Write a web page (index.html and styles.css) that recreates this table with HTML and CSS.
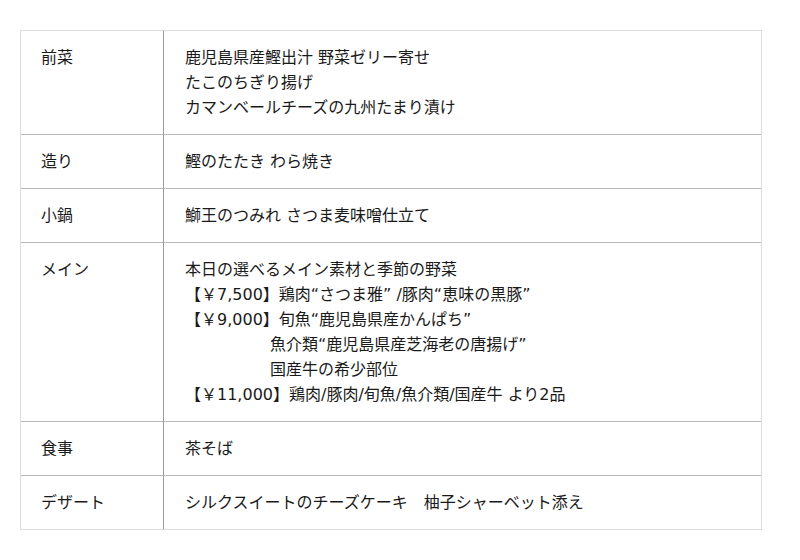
FILE: index.html
```html
<!DOCTYPE html>
<html lang="ja">
<head>
<meta charset="utf-8">
<link rel="stylesheet" href="styles.css">
</head>
<body>
<div class="wrap">
<table class="menu">
  <tr>
    <td class="label">前菜</td>
    <td class="item">鹿児島県産鰹出汁 野菜ゼリー寄せ<br>たこのちぎり揚げ<br>カマンベールチーズの九州たまり漬け</td>
  </tr>
  <tr>
    <td class="label">造り</td>
    <td class="item">鰹のたたき わら焼き</td>
  </tr>
  <tr>
    <td class="label">小鍋</td>
    <td class="item">鰤王のつみれ さつま麦味噌仕立て</td>
  </tr>
  <tr>
    <td class="label">メイン</td>
    <td class="item">本日の選べるメイン素材と季節の野菜<br>【￥7,500】鶏肉“さつま雅” /豚肉“恵味の黒豚”<br>【￥9,000】旬魚“鹿児島県産かんぱち”<br><span class="indent">魚介類“鹿児島県産芝海老の唐揚げ”</span><br><span class="indent">国産牛の希少部位</span><br>【￥11,000】鶏肉/豚肉/旬魚/魚介類/国産牛 より2品</td>
  </tr>
  <tr>
    <td class="label">食事</td>
    <td class="item">茶そば</td>
  </tr>
  <tr>
    <td class="label last">デザート</td>
    <td class="item last">シルクスイートのチーズケーキ　柚子シャーベット添え</td>
  </tr>
</table>
</div>
</body>
</html>
```
FILE: styles.css
```css
html, body {
  margin: 0;
  padding: 0;
  background: #fff;
}
.wrap {
  padding: 30px 38px 0 20px;
}
.menu {
  width: 742px;
  border-collapse: separate;
  border-spacing: 0;
  border: 1px solid #dcdcdc;
  font-family: "DejaVu Sans", "Noto Sans CJK JP", sans-serif;
  font-size: 16px;
  line-height: 25px;
  color: #1a1a1a;
}
.menu td {
  vertical-align: top;
  padding: 14px 10px 14px 20px;
  border-bottom: 1px solid #b8b8b8;
}
.menu td.last {
  border-bottom: none;
}
.menu td.label {
  width: 112px;
  border-right: 1px solid #9a9a9a;
}
.menu td.item {
  padding-left: 21px;
}
.indent {
  padding-left: 85px;
}
```
